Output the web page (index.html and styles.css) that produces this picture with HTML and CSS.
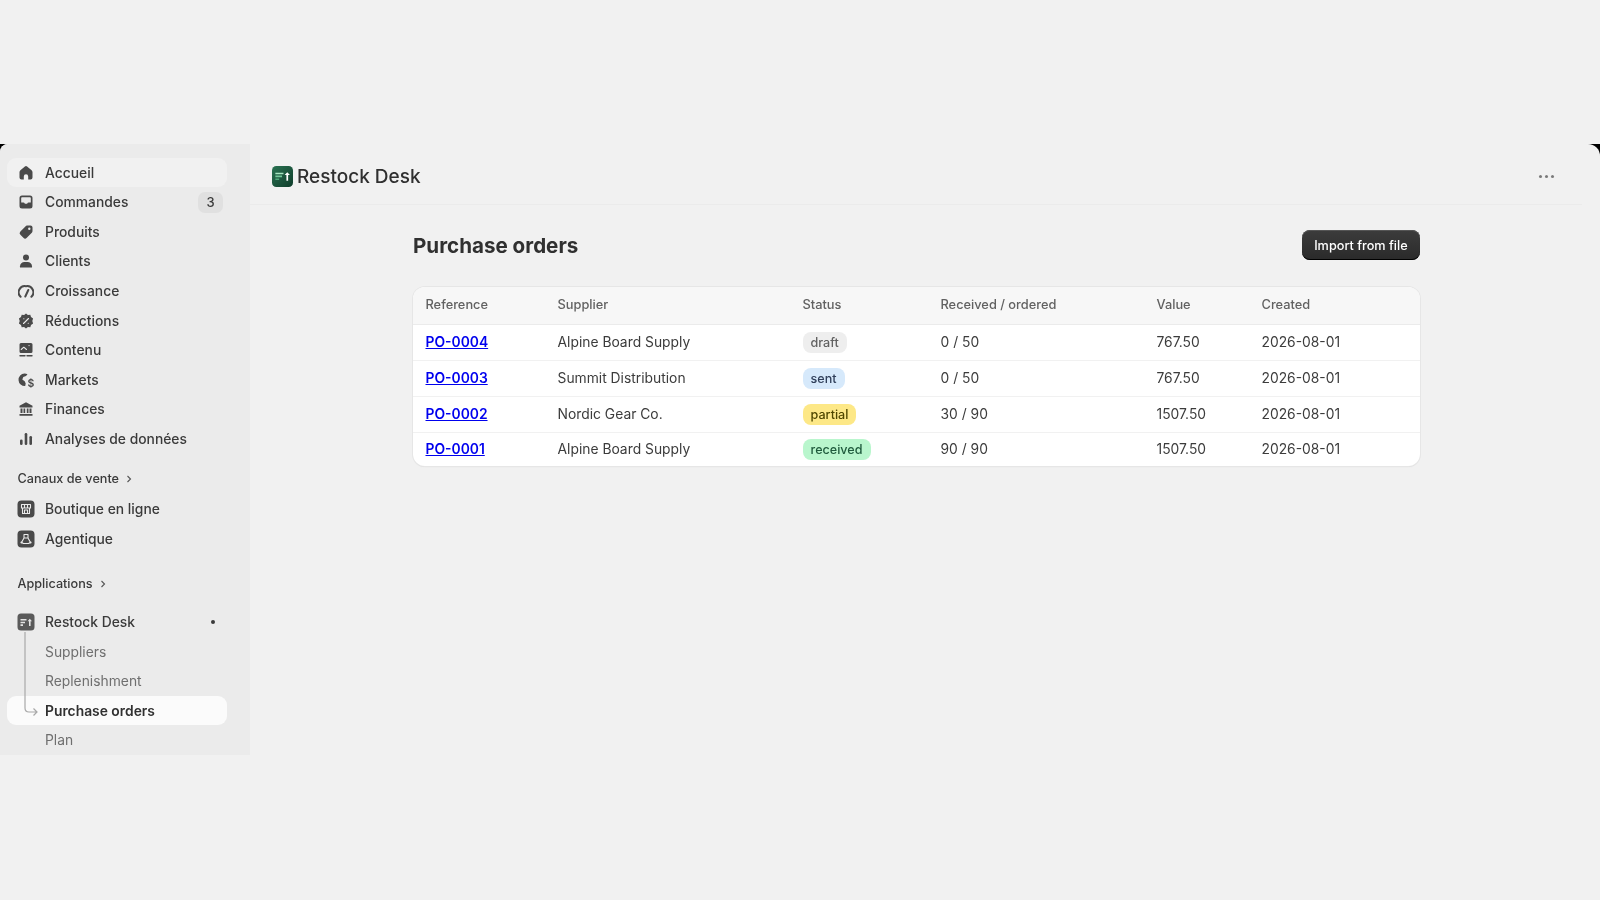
FILE: index.html
```html
<!DOCTYPE html>
<html lang="fr">
<head>
  <meta charset="UTF-8" />
  <meta name="viewport" content="width=device-width, initial-scale=1" />
  <title>Purchase orders</title>
  <link rel="stylesheet" href="styles.css">
</head>
<body>
  <div class="frame">
    <div class="admin">
      <nav class="sidebar">
        <a class="nav-item hover"><svg class="nav-icon" viewBox="0 0 16 16"><path d="M6.900 1.400a1.700 1.700 0 0 1 2.200 0l4.500 3.900c.6.500.9 1.200.9 2v5.200a2 2 0 0 1-2 2h-2.300V11.500a2.200 2.200 0 0 0-4.400 0v3h-2.300a2 2 0 0 1-2-2V7.300c0-.8.3-1.500.9-2z"/></svg>Accueil</a>
        <a class="nav-item"><svg class="nav-icon" viewBox="0 0 16 16"><path fill-rule="evenodd" d="M4 1.500h8A2.500 2.500 0 0 1 14.500 4v8a2.500 2.500 0 0 1-2.500 2.500H4A2.500 2.500 0 0 1 1.500 12V4A2.500 2.500 0 0 1 4 1.500zM3.200 8.500h2.300c.5 0 .8.200 1 .6l.3.600h2.400l.3-.6c.2-.4.500-.6 1-.6h2.300V4c0-.5-.3-.8-.8-.8H4c-.5 0-.8.300-.8.800z"/></svg>Commandes<span class="count">3</span></a>
        <a class="nav-item"><svg class="nav-icon" viewBox="0 0 16 16"><path fill-rule="evenodd" d="M9 1.500h3.500c1.100 0 2 .9 2 2V7c0 .7-.3 1.300-.7 1.800l-5 5a2.400 2.400 0 0 1-3.400 0l-3-3a2.400 2.400 0 0 1 0-3.400l5-5c.5-.6 1-.9 1.600-.9zm2.300 2a1.200 1.200 0 1 0 0 2.400 1.200 1.200 0 0 0 0-2.400z"/></svg>Produits</a>
        <a class="nav-item"><svg class="nav-icon" viewBox="0 0 16 16"><circle cx="8" cy="4.500" r="3"/><path d="M2 14.500v-1.200C2 10.800 4 9 6.500 9h3c2.500 0 4.500 1.800 4.500 4.300v1.200z"/></svg>Clients</a>
        <a class="nav-item"><svg class="nav-icon" viewBox="0 0 16 16"><path class="line" d="M2.600 13.800A6.200 6.200 0 0 1 8 3.200a6.200 6.200 0 0 1 5.400 10.600M7.300 13.500 10.300 7"/></svg>Croissance</a>
        <a class="nav-item"><svg class="nav-icon" viewBox="0 0 16 16"><path d="M8 .5l1.900 1.500 2.400-.2.700 2.300 2.100 1.300-.8 2.600.8 2.600-2.100 1.300-.7 2.300-2.400-.2L8 15.500l-1.900-1.500-2.400.2-.7-2.300-2.100-1.300.8-2.600-.8-2.600 2.100-1.300.7-2.300 2.400.2z"/><path class="cut" d="M5.500 10.500l5-5M5.800 5.800h.1M10.200 10.200h.1"/></svg>Réductions</a>
        <a class="nav-item"><svg class="nav-icon" viewBox="0 0 16 16"><path d="M3 1h10A1.500 1.500 0 0 1 14.500 2.500v7A1.500 1.500 0 0 1 13 11H3a1.500 1.500 0 0 1-1.500-1.500v-7A1.500 1.500 0 0 1 3 1z"/><path class="cut" d="M3.200 7.500l2.600-2.300 2.700 2.300M11 3.600h.1"/><path class="line thin" d="M2 13.800h5M9 13.800h5"/></svg>Contenu</a>
        <a class="nav-item"><svg class="nav-icon" viewBox="0 0 16 16"><path d="M6.500 1.500a6.300 6.300 0 0 1 3 .7L8 4 5.300 5 4.300 7.500l2.400 1.800 1 2.300-.5 2.500A6.300 6.300 0 1 1 6.500 1.500z"/><text class="dollar" x="9.600" y="14.500">$</text></svg>Markets</a>
        <a class="nav-item"><svg class="nav-icon" viewBox="0 0 16 16"><path d="M8 1.300l6.500 3.500v1.700h-13V4.800zM2.500 7.500h2v4.500h-2zM5.500 7.500h1.700v4.500H5.500zM8.800 7.500h1.700v4.500H8.800zM11.500 7.500h2v4.500h-2zM1.500 13h13v1.700h-13z"/></svg>Finances</a>
        <a class="nav-item"><svg class="nav-icon" viewBox="0 0 16 16"><rect x="2" y="8.500" width="2.600" height="5.500" rx="1.300"/><rect x="6.700" y="2" width="2.600" height="12" rx="1.300"/><rect x="11.400" y="5" width="2.600" height="9" rx="1.300"/></svg>Analyses de données</a>

        <div class="nav-heading heading-sales">Canaux de vente<svg class="chevron" viewBox="0 0 8 8"><path d="M2.500 1l3 3-3 3"/></svg></div>
        <a class="nav-item"><svg class="nav-icon tile" viewBox="0 0 18 18"><rect x=".5" y=".5" width="17" height="17" rx="4"/><path class="cut" d="M4.500 4.500h9v3.500h-9zM5.500 8v5.500h7V8M7.500 13.500V10h3v3.500M7.500 4.500V8M10.500 4.500V8"/></svg>Boutique en ligne</a>
        <a class="nav-item"><svg class="nav-icon tile" viewBox="0 0 18 18"><rect x=".5" y=".5" width="17" height="17" rx="4"/><path class="cut" d="M7 4.500h4v3.500l2.500 4.500-2 1H6.500l-2-1L7 8zM7 8h4"/><circle class="node" cx="4.500" cy="12.500" r="1.100"/><circle class="node" cx="13.500" cy="12.500" r="1.100"/></svg>Agentique</a>

        <div class="nav-heading heading-apps">Applications<svg class="chevron" viewBox="0 0 8 8"><path d="M2.500 1l3 3-3 3"/></svg></div>
        <a class="nav-item"><svg class="nav-icon tile" viewBox="0 0 18 18"><rect x=".5" y=".5" width="17" height="17" rx="3.500" fill="#5a5a5a"/><path class="mark" d="M3.500 6h6v1.600h-6zM3.500 8.700h4.500v1.600H3.500zM3.500 11.300h2.500v1.700H3.500z"/><path class="mark" d="M12.800 5.800l2.200 2.500h-1.400V13h-1.600V8.300h-1.400z"/></svg>Restock Desk<span class="dot"></span></a>
        <div class="subnav">
          <svg class="tree" viewBox="0 0 16 90"><path d="M2 0v76c0 3 1 4 4 4h8M10.500 76.500 14 80l-3.500 3.500"/></svg>
          <a class="sub-item">Suppliers</a>
          <a class="sub-item">Replenishment</a>
          <a class="sub-item active">Purchase orders</a>
          <a class="sub-item">Plan</a>
        </div>
      </nav>

      <main class="content">
        <header class="topbar">
          <div class="app-title">
            <svg class="app-logo" viewBox="0 0 22 22"><defs><linearGradient id="logoFill" x1="0" y1="0" x2="1" y2="1"><stop offset="0" stop-color="#2a7252"/><stop offset="1" stop-color="#0f3d2b"/></linearGradient></defs><rect width="22" height="22" rx="4.500" fill="url(#logoFill)"/><path d="M3.500 7h8.500v1.700H3.500z" fill="#a8e6c2"/><path d="M3.500 10h7v1.700h-7z" fill="#74c79a"/><path d="M3.500 13h4v1.700h-4z" fill="#4ea87a"/><path d="M16 6.500l2.800 3h-1.900v6h-1.800v-6h-1.900z" fill="#fff"/></svg>
            Restock Desk
          </div>
          <div class="more"><span></span><span></span><span></span></div>
        </header>

        <section class="page">
          <div class="page-head">
            <h1>Purchase orders</h1>
            <button class="primary">Import from file</button>
          </div>
          <div class="card">
            <table>
              <thead>
                <tr>
                  <th class="col-ref">Reference</th>
                  <th class="col-supplier">Supplier</th>
                  <th class="col-status">Status</th>
                  <th class="col-qty">Received / ordered</th>
                  <th class="col-value">Value</th>
                  <th>Created</th>
                </tr>
              </thead>
              <tbody>
                <tr>
                  <td><a class="po" href="#">PO-0004</a></td>
                  <td>Alpine Board Supply</td>
                  <td><span class="badge draft">draft</span></td>
                  <td>0 / 50</td>
                  <td>767.50</td>
                  <td>2026-08-01</td>
                </tr>
                <tr>
                  <td><a class="po" href="#">PO-0003</a></td>
                  <td>Summit Distribution</td>
                  <td><span class="badge sent">sent</span></td>
                  <td>0 / 50</td>
                  <td>767.50</td>
                  <td>2026-08-01</td>
                </tr>
                <tr>
                  <td><a class="po" href="#">PO-0002</a></td>
                  <td>Nordic Gear Co.</td>
                  <td><span class="badge partial">partial</span></td>
                  <td>30 / 90</td>
                  <td>1507.50</td>
                  <td>2026-08-01</td>
                </tr>
                <tr>
                  <td><a class="po" href="#">PO-0001</a></td>
                  <td>Alpine Board Supply</td>
                  <td><span class="badge received">received</span></td>
                  <td>90 / 90</td>
                  <td>1507.50</td>
                  <td>2026-08-01</td>
                </tr>
              </tbody>
            </table>
          </div>
        </section>
      </main>
    </div>
  </div>
</body>
</html>
```

FILE: styles.css
```css
* {
  box-sizing: border-box;
}
html, body {
  height: 100%;
}
body {
  margin: 0;
  padding-top: 144px;
  background: #f1f1f1;
  color: #303030;
  font-family: Inter, "Liberation Sans", sans-serif;
  font-size: 14px;
  overflow: hidden;
}
/* black shows only at the two rounded top corners */
.frame {
  height: 611px;
  background: #000;
  filter: blur(0.4px);
}
.admin {
  display: flex;
  height: 100%;
  overflow: hidden;
  background: #f1f1f1;
  border-radius: 8px 12px 0 0;
}

/* Sidebar */
.sidebar {
  width: 250px;
  flex-shrink: 0;
  background: #ebebeb;
  padding: 13.8px 23px 0 7px;
  overflow: hidden;
}
.nav-item,
.sub-item {
  display: flex;
  align-items: center;
  height: 29.6px;
  padding-left: 11px;
  border-radius: 9px;
  font-size: 13.85px;
  font-weight: 500;
  color: #3a3a3a;
}
.nav-item.hover {
  background: #f1f1f1;
}
.nav-icon {
  width: 16px;
  height: 16px;
  margin-right: 11px;
  flex-shrink: 0;
  fill: #4a4a4a;
}
.nav-icon.tile {
  width: 18px;
  height: 18px;
  margin-left: -1px;
  margin-right: 10px;
}
.line {
  fill: none;
  stroke: #4a4a4a;
  stroke-width: 2;
  stroke-linecap: round;
}
.line.thin {
  stroke-width: 1.4;
}
.cut {
  fill: none;
  stroke: #ebebeb;
  stroke-width: 1.1;
  stroke-linecap: round;
  stroke-linejoin: round;
}
.node {
  fill: #ebebeb;
}
.mark {
  fill: #e4e4e4;
}
.dollar {
  font-size: 10.5px;
  font-weight: 600;
  fill: #4a4a4a;
}
.count {
  margin-left: auto;
  margin-right: 4px;
  width: 25px;
  height: 21px;
  border-radius: 7px;
  background: #e0e0e0;
  font-size: 13px;
  display: flex;
  align-items: center;
  justify-content: center;
}
.dot {
  margin-left: auto;
  margin-right: 12px;
  width: 4px;
  height: 4px;
  border-radius: 50%;
  background: #3a3a3a;
}
.nav-heading {
  display: flex;
  align-items: center;
  gap: 6px;
  padding-left: 10.5px;
  font-size: 12.65px;
  font-weight: 500;
  color: #3a3a3a;
  height: 20px;
}
.heading-sales {
  margin: 15.2px 0 5.5px;
}
.heading-apps {
  margin: 20px 0 13.5px;
}
.chevron {
  width: 8px;
  height: 8px;
  fill: none;
  stroke: #555;
  stroke-width: 1.1;
}
.subnav {
  position: relative;
}
.tree {
  position: absolute;
  left: 16px;
  top: -4.5px;
  width: 16px;
  height: 90px;
  fill: none;
  stroke: #a8a8a8;
  stroke-width: 1.2;
}
.sub-item {
  padding-left: 38px;
  font-weight: 400;
  color: #6f6f6f;
}
.sub-item.active {
  background: #fbfbfb;
  color: #303030;
  font-weight: 600;
}

/* Main area */
.content {
  flex: 1;
  min-width: 0;
}
.topbar {
  display: flex;
  align-items: center;
  justify-content: space-between;
  height: 61px;
  margin-right: 18px;
  padding: 5px 28px 0 22px;
  border-bottom: 1px solid #ebebeb;
}
.app-title {
  display: flex;
  align-items: center;
  gap: 4px;
  font-size: 19px;
  font-weight: 500;
}
.app-logo {
  width: 21px;
  height: 21px;
}
.more {
  display: flex;
  gap: 2.3px;
}
.more span {
  width: 3.5px;
  height: 3.5px;
  border-radius: 50%;
  background: #7a7a7a;
}
.page {
  width: 1007px;
  margin-left: 163px;
}
.page-head {
  display: flex;
  align-items: center;
  justify-content: space-between;
  margin: 25px 0 27px;
}
h1 {
  margin: 0;
  font-size: 20.6px;
  font-weight: 650;
  color: #303030;
}
.primary {
  height: 30px;
  padding: 0 12.3px;
  border: 0;
  border-radius: 8px;
  background: linear-gradient(#3c3c3c, #2a2a2a);
  box-shadow: inset 0 -1px 0 #000, inset 0 1px 0 #555;
  color: #fff;
  font-family: inherit;
  font-size: 12.7px;
  font-weight: 550;
}
.card {
  border-radius: 12px;
  background: #fff;
  overflow: hidden;
  box-shadow: 0 0 0 1px #e6e6e6, 0 1px 1px #d8d8d8;
}
table {
  width: 100%;
  border-collapse: collapse;
  table-layout: fixed;
}
th {
  height: 37px;
  padding: 0 12.5px 2px;
  background: #f7f7f7;
  border-bottom: 1px solid #ebebeb;
  text-align: left;
  font-size: 12.8px;
  font-weight: 500;
  color: #616161;
}
td {
  height: 36px;
  padding: 0 12.5px;
  border-bottom: 1px solid #f1f1f1;
  font-size: 13.85px;
  color: #3c3c3c;
}
tr:last-child td {
  height: 34px;
  border-bottom: 0;
}
.col-ref { width: 132px; }
.col-supplier { width: 245px; }
.col-status { width: 138px; }
.col-qty { width: 216px; }
.col-value { width: 105px; }
.po {
  color: #0000ee;
  font-weight: 600;
}
.badge {
  display: inline-block;
  vertical-align: middle;
  padding: 0 8px;
  height: 21px;
  line-height: 21px;
  border-radius: 8px;
  font-size: 12.6px;
  font-weight: 450;
}
.draft { background: #eeeeee; color: #616161; }
.sent { background: #d6e9fb; color: #303f5a; }
.partial { background: #fde887; color: #4f4700; }
.received { background: #b9f6cd; color: #1f5a3c; }
```
